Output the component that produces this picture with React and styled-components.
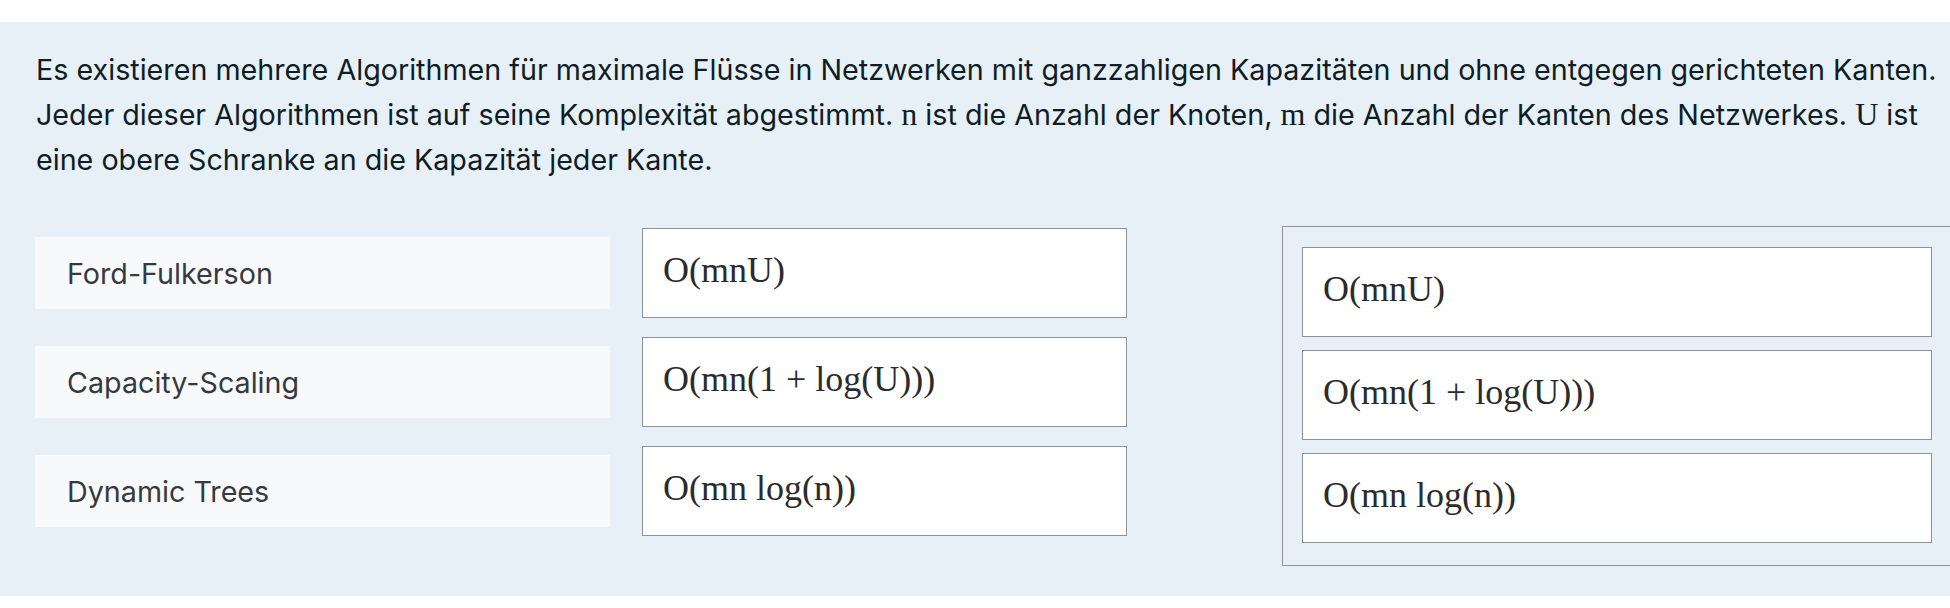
import React from "react";
import styled, { createGlobalStyle } from "styled-components";

const GlobalStyle = createGlobalStyle`
  html, body {
    margin: 0;
    padding: 0;
    background: #ffffff;
    overflow: hidden;
  }
  body {
    font-family: Inter, "Noto Sans", "Liberation Sans", sans-serif;
  }
  * { box-sizing: border-box; }
`;

const Page = styled.div`
  width: 1950px;
  padding-top: 22px;
  background: #ffffff;
`;

const Question = styled.section`
  background: #e7f0f6;
  padding: 25px 0 30px 35px;
  overflow: hidden;
`;

const Prompt = styled.p`
  margin: 0 -12px 0 1px;
  font-size: 28.7px;
  line-height: 45px;
  color: #0f1d26;
`;

const MathVar = styled.span`
  font-family: "Liberation Serif", "Times New Roman", serif;
  font-size: 32px;
`;

const Workspace = styled.div`
  display: flex;
  align-items: flex-start;
  margin-top: 44px;
`;

const Pairs = styled.div`
  display: grid;
  grid-template-columns: 575px 485px;
  column-gap: 32px;
  row-gap: 19px;
  margin-top: 2px;
  flex-shrink: 0;
`;

const Label = styled.div`
  align-self: center;
  height: 72px;
  display: flex;
  align-items: center;
  padding-left: 32px;
  background: #f8f9fb;
  font-size: 28.7px;
  color: #343a40;
`;

const Slot = styled.div`
  height: 90px;
  border: 1px solid #8d9399;
  background: #ffffff;
  padding: 20px;
`;

const Formula = styled.span`
  font-family: "Liberation Serif", "Times New Roman", serif;
  font-size: 36px;
  line-height: normal;
  color: #2b2b2b;
  white-space: nowrap;
`;

const Pool = styled.div`
  flex-shrink: 0;
  width: 670px;
  margin-left: 155px;
  border: 1px solid #8d9399;
  padding: 20px 19px 22px 19px;
  display: flex;
  flex-direction: column;
  gap: 13px;
`;

const rows = [
  { label: "Ford-Fulkerson", formula: "O(mnU)" },
  { label: "Capacity-Scaling", formula: "O(mn(1 + log(U)))" },
  { label: "Dynamic Trees", formula: "O(mn log(n))" },
];

export default function App() {
  return (
    <Page>
      <GlobalStyle />
      <Question>
        <Prompt>
          Es existieren mehrere Algorithmen für maximale Flüsse in Netzwerken mit
          ganzzahligen Kapazitäten und ohne entgegen gerichteten Kanten. Jeder
          dieser Algorithmen ist auf seine Komplexität abgestimmt.{" "}
          <MathVar>n</MathVar> ist die Anzahl der Knoten, <MathVar>m</MathVar> die
          Anzahl der Kanten des Netzwerkes. <MathVar>U</MathVar> ist eine obere
          Schranke an die Kapazität jeder Kante.
        </Prompt>
        <Workspace>
          <Pairs>
            {rows.map((r) => (
              <React.Fragment key={r.label}>
                <Label>{r.label}</Label>
                <Slot>
                  <Formula>{r.formula}</Formula>
                </Slot>
              </React.Fragment>
            ))}
          </Pairs>
          <Pool>
            {rows.map((r) => (
              <Slot key={r.formula}>
                <Formula>{r.formula}</Formula>
              </Slot>
            ))}
          </Pool>
        </Workspace>
      </Question>
    </Page>
  );
}
